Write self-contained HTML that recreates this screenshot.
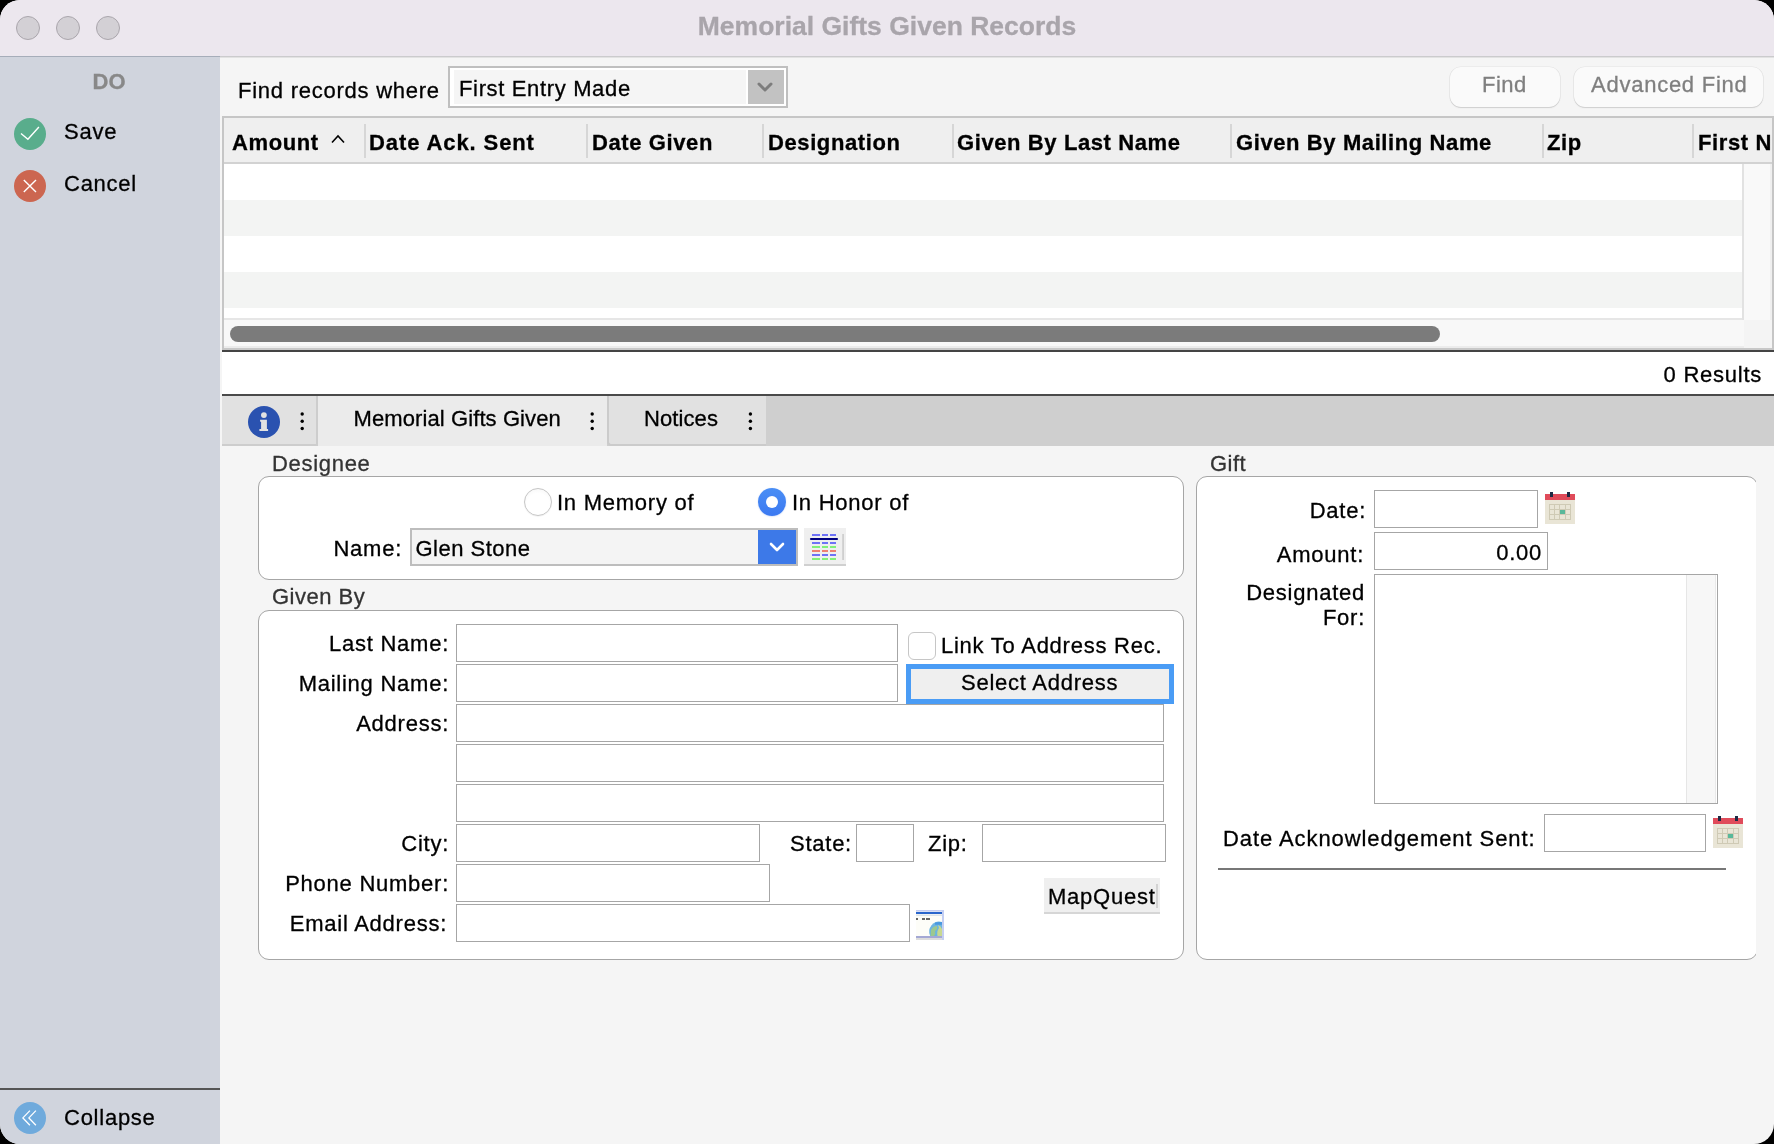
<!DOCTYPE html>
<html><head><meta charset="utf-8">
<style>
*{box-sizing:border-box;margin:0;padding:0}
html,body{width:1774px;height:1144px;overflow:hidden;background:#000;-webkit-font-smoothing:antialiased;font-family:"Liberation Sans",sans-serif;color:#000}
#win{will-change:transform;position:absolute;left:0;top:0;width:1774px;height:1144px;border-radius:20px;overflow:hidden;background:#f5f5f5}
.a{position:absolute}
.t{position:absolute;white-space:nowrap;font-size:22px;line-height:26px;letter-spacing:0.75px;-webkit-text-stroke:0.3px currentColor}
.r{text-align:right}
.b{font-weight:bold;letter-spacing:0.6px}
.tl{position:absolute;top:16px;width:24px;height:24px;border-radius:50%;background:#d3d0d5;border:1px solid #aaa6ac}
.fld{position:absolute;background:#fff;border:1px solid #a6a6a6;height:38px}
.sep{position:absolute;top:124px;width:2px;height:34px;background:#d6d6d6}
.dot{position:absolute;width:3.4px;height:3.4px;border-radius:50%;background:#000}
.grp{position:absolute;background:#fff;border:1px solid #a6a6a6;border-radius:11px}
</style></head><body>
<div id="win">
  <!-- title bar -->
  <div class="a" style="left:0;top:0;width:1774px;height:56px;background:#ece7ee"></div>
  <div class="a" style="left:220px;top:56px;width:1554px;height:1px;background:#cbcbcd"></div><div class="a" style="left:0;top:56px;width:220px;height:1px;background:#a6adb9"></div><div class="a" style="left:0;top:57px;width:220px;height:1px;background:#c4c9d2"></div><div class="a" style="left:220px;top:57px;width:1554px;height:1px;background:#e2e2e2"></div>
  <div class="tl" style="left:16px"></div>
  <div class="tl" style="left:56px"></div>
  <div class="tl" style="left:96px"></div>
  <div class="t b" style="left:0;width:1774px;text-align:center;top:11px;line-height:30px;color:#a9a5ab;font-size:26.5px;letter-spacing:0">Memorial Gifts Given Records</div>

  <!-- sidebar -->
  <div class="a" style="left:0;top:57px;width:220px;height:1087px;background:#d0d4dd"></div>
  <div class="t b" style="left:0;width:218px;text-align:center;top:69px;color:#888;letter-spacing:0">DO</div>
  <svg class="a" style="left:14px;top:118px" width="32" height="32" viewBox="0 0 32 32"><circle cx="16" cy="16" r="16" fill="#59ad8c"/><path d="M7 15.5 L13.9 21.2 L24.9 9" fill="none" stroke="#fff" stroke-width="1.4"/></svg>
  <div class="t" style="left:64px;top:119px">Save</div>
  <svg class="a" style="left:14px;top:170px" width="32" height="32" viewBox="0 0 32 32"><circle cx="16" cy="16" r="16" fill="#cc6650"/><path d="M9.8 9.9 L22 22 M22 9.9 L9.8 22" fill="none" stroke="#fff" stroke-width="1.4"/></svg>
  <div class="t" style="left:64px;top:171px">Cancel</div>
  <div class="a" style="left:0;top:1088px;width:220px;height:2px;background:#555"></div>
  <svg class="a" style="left:14px;top:1102px" width="32" height="32" viewBox="0 0 32 32"><circle cx="16" cy="16" r="16" fill="#6faadc"/><path d="M15.9 8.6 L8.9 15.9 L15.9 23.3 M21.9 8.6 L14.9 15.9 L21.9 23.3" fill="none" stroke="#fff" stroke-width="1.3"/></svg>
  <div class="t" style="left:64px;top:1105px">Collapse</div>

  <!-- find bar -->
  <div class="t" style="left:238px;top:78px">Find records where</div>
  <div class="a" style="left:448px;top:66px;width:340px;height:42px;border:2px solid #bfbfbf;background:#fff"></div><div class="a" style="left:454px;top:70px;width:292px;height:34px;background:#f5f5f5"></div>
  <div class="a" style="left:748px;top:70px;width:36px;height:34px;background:#c2c2c2"></div>
  <svg class="a" style="left:748px;top:70px" width="36" height="34" viewBox="0 0 36 34"><path d="M11 14 L17 20 L23 14" fill="none" stroke="#7d7d7d" stroke-width="3" stroke-linecap="round" stroke-linejoin="round"/></svg>
  <div class="t" style="left:459px;top:76px;letter-spacing:0.65px">First Entry Made</div>
  <div class="a" style="left:1450px;top:66.5px;width:110px;height:40.5px;border-radius:11px;background:#fafafa;box-shadow:0 0 0 0.6px rgba(0,0,0,0.07),0 1px 1.2px rgba(0,0,0,0.13)"></div>
  <div class="t" style="left:1482px;top:71.7px;color:#7f7f7f;letter-spacing:0.5px">Find</div>
  <div class="a" style="left:1574px;top:66.5px;width:189px;height:40.5px;border-radius:11px;background:#fafafa;box-shadow:0 0 0 0.6px rgba(0,0,0,0.07),0 1px 1.2px rgba(0,0,0,0.13)"></div>
  <div class="t" style="left:1591px;top:71.7px;color:#7f7f7f">Advanced Find</div>

  <!-- table -->
  <div class="a" style="left:222px;top:116px;width:1552px;height:236px;background:#fff;border-top:2px solid #c6c6c6;border-left:2px solid #c6c6c6"></div>
  <div class="a" style="left:224px;top:118px;width:1550px;height:44px;background:#efefef"></div>
  <div class="a" style="left:224px;top:162px;width:1550px;height:2px;background:#d2d2d2"></div>
  <div class="sep" style="left:364px"></div>
  <div class="sep" style="left:586px"></div>
  <div class="sep" style="left:762px"></div>
  <div class="sep" style="left:952px"></div>
  <div class="sep" style="left:1230px"></div>
  <div class="sep" style="left:1542px"></div>
  <div class="sep" style="left:1692px"></div>
  <div class="t b" style="left:232px;top:130px">Amount</div>
  <svg class="a" style="left:330px;top:133px" width="16" height="12" viewBox="0 0 16 12"><path d="M2 9.5 L8 3 L14 9.5" fill="none" stroke="#000" stroke-width="1.6"/></svg>
  <div class="t b" style="left:369px;top:130px;letter-spacing:0.9px">Date Ack. Sent</div>
  <div class="t b" style="left:592px;top:130px">Date Given</div>
  <div class="t b" style="left:768px;top:130px">Designation</div>
  <div class="t b" style="left:957px;top:130px">Given By Last Name</div>
  <div class="t b" style="left:1236px;top:130px">Given By Mailing Name</div>
  <div class="t b" style="left:1547px;top:130px">Zip</div>
  <div class="t b" style="left:1698px;top:130px">First N</div>
  <div class="a" style="left:1772px;top:116px;width:2px;height:236px;background:#c6c6c6"></div>
  <div class="a" style="left:224px;top:200px;width:1519px;height:36px;background:#f3f4f3"></div>
  <div class="a" style="left:224px;top:272px;width:1519px;height:36px;background:#f3f4f3"></div>
  <div class="a" style="left:224px;top:318px;width:1520px;height:2px;background:#e6e6e6"></div>
  <div class="a" style="left:224px;top:320px;width:1548px;height:28px;background:#f8f8f8"></div>
  <div class="a" style="left:1742px;top:164px;width:30px;height:156px;background:#f9f9f9;border-left:2px solid #e2e2e2;border-right:2px solid #efefef"></div><div class="a" style="left:224px;top:346px;width:1520px;height:2px;background:#ececec"></div><div class="a" style="left:1744px;top:320px;width:28px;height:28px;background:#f4f4f4"></div><div class="a" style="left:224px;top:348px;width:1548px;height:2px;background:#c8c8c8"></div>
  <div class="a" style="left:230px;top:326px;width:1210px;height:16px;border-radius:8px;background:#7b7b7b"></div>
  <div class="a" style="left:222px;top:350px;width:1552px;height:2px;background:#444"></div>

  <!-- results -->
  <div class="a" style="left:222px;top:352px;width:1552px;height:42px;background:#fff"></div>
  <div class="t r" style="left:400px;width:1362px;top:362px">0 Results</div>
  <div class="a" style="left:222px;top:394px;width:1552px;height:2px;background:#4a4a4a"></div>

  <!-- tabs -->
  <div class="a" style="left:222px;top:396px;width:1552px;height:50px;background:#cfcfcf"></div>
  <div class="a" style="left:222px;top:396px;width:96px;height:50px;background:#e1e1e1;border-right:2px solid #cdcdcd;border-bottom:2px solid #cdcdcd"></div>
  <div class="a" style="left:318px;top:396px;width:289px;height:50px;background:#ebebeb"></div>
  <div class="a" style="left:607px;top:396px;width:159px;height:50px;background:#e1e1e1;border-left:2px solid #cbcbcb;border-bottom:2px solid #cbcbcb;border-bottom-left-radius:4px"></div>
  <svg class="a" style="left:248px;top:406px" width="32" height="32" viewBox="0 0 32 32"><circle cx="16" cy="16" r="16" fill="#2a52b0"/><circle cx="15.9" cy="9.1" r="2.9" fill="#e2e2e2"/><path d="M12.1 13.8 H18.9 V22.9 H20.1 V25 H11.4 V22.9 H13.1 V16 L12.1 15.4 Z" fill="#e2e2e2"/></svg>
  <svg class="a" style="left:298px;top:408px" width="10" height="26" viewBox="298 408 10 26"><circle cx="302.2" cy="414" r="1.7"/><circle cx="302.2" cy="421.3" r="1.7"/><circle cx="302.2" cy="428.5" r="1.7"/></svg>
  <div class="t" style="left:353.5px;top:406px;letter-spacing:0.1px">Memorial Gifts Given</div>
  <svg class="a" style="left:588px;top:408px" width="10" height="26" viewBox="588 408 10 26"><circle cx="592.2" cy="414" r="1.7"/><circle cx="592.2" cy="421.3" r="1.7"/><circle cx="592.2" cy="428.5" r="1.7"/></svg>
  <div class="t" style="left:644px;top:406px;letter-spacing:0.1px">Notices</div>
  <svg class="a" style="left:746px;top:408px" width="10" height="26" viewBox="746 408 10 26"><circle cx="750.4" cy="414" r="1.7"/><circle cx="750.4" cy="421.3" r="1.7"/><circle cx="750.4" cy="428.5" r="1.7"/></svg>

  <!-- form -->
  <div class="a" style="left:220px;top:446px;width:1536px;height:698px;overflow:hidden">
   <div class="a" style="left:-220px;top:-446px;width:1774px;height:1144px">
    <div class="t" style="left:272px;top:450.5px;color:#333;letter-spacing:0.7px">Designee</div>
    <div class="grp" style="left:258px;top:476px;width:926px;height:104px"></div>
    <div class="a" style="left:524px;top:488px;width:28px;height:28px;border-radius:50%;background:radial-gradient(circle at 50% 60%,#fff 55%,#f2f2f2 100%);border:1px solid #c6c6c6;box-shadow:0 0.5px 1px rgba(0,0,0,0.08)"></div>
    <div class="t" style="left:557px;top:490px">In Memory of</div>
    <div class="a" style="left:758px;top:488px;width:28px;height:28px;border-radius:50%;background:linear-gradient(#4a8ef5,#3b79f1);box-shadow:0 0.5px 1.5px rgba(30,90,220,0.25)"></div>
    <div class="a" style="left:766px;top:496px;width:12px;height:12px;border-radius:50%;background:#fff"></div>
    <div class="t" style="left:792px;top:490px">In Honor of</div>
    <div class="t r" style="left:200px;width:202px;top:536px">Name:</div>
    <div class="a" style="left:410px;top:528px;width:388px;height:38px;border:2px solid #bdbdbd;background:#f4f4f4"></div>
    <div class="t" style="left:415.5px;top:536px;letter-spacing:0.5px">Glen Stone</div>
    <div class="a" style="left:758px;top:530px;width:38px;height:34px;background:#3d79e8"></div>
    <svg class="a" style="left:758px;top:530px" width="38" height="34" viewBox="0 0 38 34"><path d="M13 14 L19 20 L25 14" fill="none" stroke="#fff" stroke-width="2.6" stroke-linecap="round" stroke-linejoin="round"/></svg>
    <div class="a" style="left:804px;top:528px;width:42px;height:38px;background:#efefef"></div>
    <svg class="a" style="left:804px;top:528px" width="42" height="38" viewBox="0 0 42 38">
      <rect x="0" y="36" width="42" height="2" fill="#d0d0d0"/>
      <g stroke-width="2">
      <path d="M8 7h8M18 7h6M26 7h6" stroke="#6e72f6"/>
      <path d="M7 11h26" stroke="#000080" stroke-width="2.2" stroke-linecap="round"/>
      <path d="M8 15h8M18 15h6M26 15h6" stroke="#6e72f6"/>
      <path d="M8 19h8M18 19h6M26 19h6" stroke="#82f07a"/>
      <path d="M8 23h8M18 23h6M26 23h6" stroke="#ee8070"/>
      <path d="M8 27h8M18 27h6M26 27h6" stroke="#6e72f6"/>
      <path d="M8 31h8M18 31h6M26 31h6" stroke="#82f07a"/>
      <path d="M39.1 6v26" stroke="#cfcfcf" stroke-width="1.8"/>
      </g>
    </svg>

    <div class="t" style="left:272px;top:584px;color:#333;letter-spacing:0.5px">Given By</div>
    <div class="grp" style="left:258px;top:610px;width:926px;height:350px"></div>
    <div class="t r" style="left:200px;width:249px;top:631px">Last Name:</div>
    <div class="fld" style="left:456px;top:624px;width:442px"></div>
    <div class="t r" style="left:200px;width:249px;top:671px">Mailing Name:</div>
    <div class="fld" style="left:456px;top:664px;width:442px"></div>
    <div class="t r" style="left:200px;width:249px;top:711px">Address:</div>
    <div class="fld" style="left:456px;top:704px;width:708px"></div>
    <div class="fld" style="left:456px;top:744px;width:708px"></div>
    <div class="fld" style="left:456px;top:784px;width:708px"></div>
    <div class="t r" style="left:200px;width:249px;top:831px">City:</div>
    <div class="fld" style="left:456px;top:824px;width:304px"></div>
    <div class="t" style="left:790px;top:831px">State:</div>
    <div class="fld" style="left:856px;top:824px;width:58px"></div>
    <div class="t" style="left:928px;top:831px">Zip:</div>
    <div class="fld" style="left:982px;top:824px;width:184px"></div>
    <div class="t r" style="left:200px;width:249px;top:871px">Phone Number:</div>
    <div class="fld" style="left:456px;top:864px;width:314px"></div>
    <div class="t r" style="left:200px;width:247px;top:911px">Email Address:</div>
    <div class="fld" style="left:456px;top:904px;width:454px"></div>
    <svg class="a" style="left:916px;top:910px" width="28" height="30" viewBox="0 0 28 30">
      <rect x="0" y="0" width="28" height="30" fill="#fdfdf8"/>
      <rect x="0" y="0" width="28" height="1.6" fill="#c4cef2"/>
      <rect x="26" y="0" width="2" height="30" fill="#c4cef2"/>
      <rect x="0" y="2" width="26" height="2" fill="#2a66cc"/>
      <rect x="0" y="4.5" width="26" height="1.5" fill="#dde4ea"/>
      <rect x="0" y="8" width="2" height="2" fill="#666"/><rect x="6" y="8" width="3" height="2" fill="#666"/><rect x="10" y="8" width="4" height="2" fill="#666"/>
      <path d="M14.2 26 A10 10 0 0 1 26 12.1 V26 Z" fill="#6cb4e0"/>
      <path d="M15 20 q2 -4 6 -4 q1 3 -2 5 q1 3 -1 5 h-3.5 z" fill="#9cc890"/>
      <path d="M22 15 q3 1 4 4 v7 h-4.5 q-1 -5 1.5 -8 z" fill="#c8d890"/>
      <path d="M19 12.6 q3 -0.8 7 -0.5 v2.6 h-7 z" fill="#4a98e0"/>
      <rect x="0" y="26" width="26" height="2" fill="#a4a8d4"/>
      <rect x="0" y="28" width="26" height="2" fill="#dcdcdc"/>
    </svg>
    <div class="a" style="left:908px;top:632px;width:28px;height:28px;border-radius:6px;background:#fff;border:1px solid #c6c6c6"></div>
    <div class="t" style="left:941px;top:633px">Link To Address Rec.</div>
    <div class="a" style="left:906px;top:664px;width:268px;height:40px;border:5.5px solid #4a9cf5;background:#efefef"></div>
    <div class="t" style="left:961px;top:670px">Select Address</div>
    <div class="a" style="left:1044px;top:878px;width:116px;height:36px;background:#efefef;border-bottom:2px solid #d6d6d6"></div>
    <div class="a" style="left:1156px;top:884px;width:1.6px;height:23.5px;background:#d2d2d2"></div>
    <div class="t" style="left:1048px;top:884px">MapQuest</div>

    <div class="t" style="left:1210px;top:450.5px;color:#333;letter-spacing:0.5px">Gift</div>
    <div class="grp" style="left:1196px;top:476px;width:562px;height:484px"></div>
    <div class="t r" style="left:200px;width:1166px;top:497.5px">Date:</div>
    <div class="fld" style="left:1374px;top:490px;width:164px"></div>
    <svg class="a cal" style="left:1545px;top:492px" width="30" height="32" viewBox="0 0 30 32">
      <rect x="0" y="2" width="30" height="30" fill="#e9e5d6"/>
      <rect x="0" y="2" width="30" height="6" fill="#e04b5a"/>
      <rect x="5" y="0" width="3" height="5" fill="#1e2a44"/><rect x="22" y="0" width="3" height="5" fill="#1e2a44"/>
      <g stroke="#cfcab5" stroke-width="1" fill="none">
        <rect x="4.5" y="12.5" width="21" height="15"/>
        <path d="M9.5 12.5v15M14.5 12.5v15M20.5 12.5v15M4.5 17.5h21M4.5 22.5h21"/>
      </g>
      <rect x="15" y="18" width="5" height="4" fill="#58b89a"/>
    </svg>
    <div class="t r" style="left:200px;width:1164px;top:541.5px">Amount:</div>
    <div class="fld" style="left:1374px;top:532px;width:174px"></div>
    <div class="t r" style="left:1200px;width:342px;top:540px">0.00</div>
    <div class="t r" style="left:200px;width:1165px;top:580px">Designated</div>
    <div class="t r" style="left:200px;width:1165px;top:605px">For:</div>
    <div class="fld" style="left:1374px;top:574px;width:344px;height:230px"></div>
    <div class="a" style="left:1686px;top:575px;width:30px;height:228px;background:#f7f7f7;border-left:1px solid #e6e6e6;border-right:1px solid #e9e9e9"></div>
    <div class="t" style="left:1223px;top:825.5px;letter-spacing:0.92px">Date Acknowledgement Sent:</div>
    <div class="fld" style="left:1544px;top:814px;width:162px"></div>
    <svg class="a cal" style="left:1713px;top:816px" width="30" height="32" viewBox="0 0 30 32">
      <rect x="0" y="2" width="30" height="30" fill="#e9e5d6"/>
      <rect x="0" y="2" width="30" height="6" fill="#e04b5a"/>
      <rect x="5" y="0" width="3" height="5" fill="#1e2a44"/><rect x="22" y="0" width="3" height="5" fill="#1e2a44"/>
      <g stroke="#cfcab5" stroke-width="1" fill="none">
        <rect x="4.5" y="12.5" width="21" height="15"/>
        <path d="M9.5 12.5v15M14.5 12.5v15M20.5 12.5v15M4.5 17.5h21M4.5 22.5h21"/>
      </g>
      <rect x="15" y="18" width="5" height="4" fill="#58b89a"/>
    </svg>
    <div class="a" style="left:1218px;top:868px;width:508px;height:2px;background:#777"></div>
   </div>
  </div>
</div>
</body></html>
